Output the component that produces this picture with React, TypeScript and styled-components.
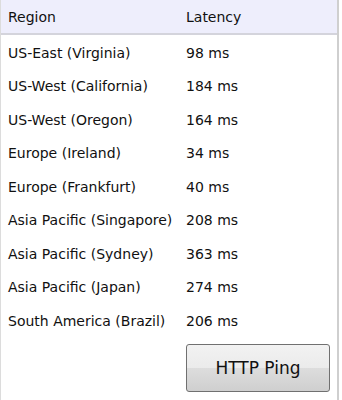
import React from 'react';
import styled, { createGlobalStyle } from 'styled-components';

const GlobalStyle = createGlobalStyle`
  html, body {
    margin: 0;
    padding: 0;
    background: #ffffff;
  }
  body {
    font-family: 'DejaVu Sans', Verdana, sans-serif;
    color: #111111;
  }
`;

const Panel = styled.div`
  width: 339px;
  height: 400px;
  box-sizing: border-box;
  border-left: 1px solid #dcdcdc;
  border-right: 2px solid #cfcfcf;
  display: flex;
  flex-direction: column;
`;

const HeaderRow = styled.div`
  display: grid;
  grid-template-columns: 178px 1fr;
  height: 35px;
  box-sizing: border-box;
  align-items: center;
  padding-left: 7px;
  background: #eeeefc;
  border-bottom: 2px solid #d4d4dc;
  font-size: 14px;
`;

const Body = styled.div`
  padding-top: 1px;
`;

const Row = styled.div`
  display: grid;
  grid-template-columns: 178px 1fr;
  height: 33.5px;
  align-items: center;
  padding-left: 7px;
  font-size: 14px;
`;

const Footer = styled.div`
  display: flex;
  padding: 6px 0 0 185px;
`;

const PingButton = styled.button`
  width: 144px;
  height: 48px;
  border: 1px solid #707070;
  border-radius: 3px;
  background: linear-gradient(to bottom, #f2f2f2 0%, #ebebeb 50%, #dddddd 50%, #cfcfcf 100%);
  font-family: 'DejaVu Sans', Verdana, sans-serif;
  font-size: 17px;
  color: #111111;
  padding: 0;
`;

const regions = [
  { name: 'US-East (Virginia)', latency: 98 },
  { name: 'US-West (California)', latency: 184 },
  { name: 'US-West (Oregon)', latency: 164 },
  { name: 'Europe (Ireland)', latency: 34 },
  { name: 'Europe (Frankfurt)', latency: 40 },
  { name: 'Asia Pacific (Singapore)', latency: 208 },
  { name: 'Asia Pacific (Sydney)', latency: 363 },
  { name: 'Asia Pacific (Japan)', latency: 274 },
  { name: 'South America (Brazil)', latency: 206 },
];

export default function App() {
  return (
    <>
      <GlobalStyle />
      <Panel>
        <HeaderRow>
          <span>Region</span>
          <span>Latency</span>
        </HeaderRow>
        <Body>
          {regions.map((r) => (
            <Row key={r.name}>
              <span>{r.name}</span>
              <span>{r.latency} ms</span>
            </Row>
          ))}
        </Body>
        <Footer>
          <PingButton>HTTP Ping</PingButton>
        </Footer>
      </Panel>
    </>
  );
}
